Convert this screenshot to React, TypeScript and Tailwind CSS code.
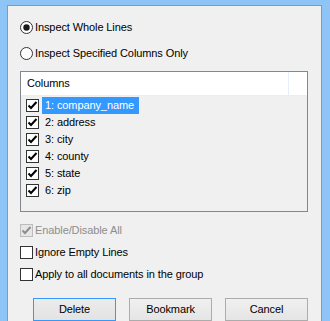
import React from "react";

const font = { fontFamily: '"Liberation Sans", Arial, sans-serif' };

function Radio({ checked }: { checked?: boolean }) {
  return (
    <svg width="13" height="13" viewBox="0 0 13 13" className="shrink-0">
      <circle cx="6.5" cy="6.5" r="6" fill="#fff" stroke="#333" strokeWidth="1" />
      {checked && <circle cx="6.5" cy="6.5" r="3.2" fill="#1a1a1a" />}
    </svg>
  );
}

function Check({ checked, disabled }: { checked?: boolean; disabled?: boolean }) {
  const border = disabled ? "#bcbcbc" : "#333";
  const bg = disabled ? "#e6e6e6" : "#fff";
  const mark = disabled ? "#8d8d8d" : "#000";
  return (
    <svg width="13" height="13" viewBox="0 0 13 13" className="shrink-0">
      <rect x="0.5" y="0.5" width="12" height="12" fill={bg} stroke={border} />
      {checked && (
        <path d="M2.5 6.5 L5 9 L10.5 3" fill="none" stroke={mark} strokeWidth="2" />
      )}
    </svg>
  );
}

const cols = ["1: company_name", "2: address", "3: city", "4: county", "5: state", "6: zip"];

export default function App() {
  return (
    <div
      className="w-[330px] h-[321px] overflow-hidden bg-[#8ec4f6] pl-[7px] pt-[5px] pr-[8px] text-[11px] tracking-[-0.1px] text-black"
      style={font}
    >
      <div className="h-full bg-[#f0f0f0] border-l border-t border-r border-[#6aa0d4] flex flex-col pl-[12px] pr-[13px]">
        <div className="mt-[15px] flex items-center h-[13px] gap-[2px]">
          <Radio checked />
          <span className="leading-[13px]">Inspect Whole Lines</span>
        </div>
        <div className="mt-[13px] flex items-center h-[13px] gap-[2px]">
          <Radio />
          <span className="leading-[13px]">Inspect Specified Columns Only</span>
        </div>
        <div className="mt-[11px] h-[143px] border border-[#828790] flex flex-col">
          <div className="h-[24px] bg-white border-b border-[#e5eefb] flex shrink-0">
            <div className="flex-1 flex items-center pl-[6px] border-r border-[#e5eefb]">Columns</div>
            <div className="w-[18px]" />
          </div>
          <div className="flex flex-col pt-[1px]">
            {cols.map((c, i) => (
              <div key={c} className="h-[17px] flex items-center pl-[5px]">
                <Check checked />
                <span
                  className={
                    "ml-[3px] h-[17px] flex items-center pl-[3px] pr-[5px] " +
                    (i === 0 ? "bg-[#3399ff] text-white" : "")
                  }
                >
                  {c}
                </span>
              </div>
            ))}
          </div>
        </div>
        <div className="mt-[12px] flex items-center h-[13px] gap-[2px]">
          <Check checked disabled />
          <span className="leading-[13px] text-[#8d8d8d]">Enable/Disable All</span>
        </div>
        <div className="mt-[9px] flex items-center h-[13px] gap-[2px]">
          <Check />
          <span className="leading-[13px]">Ignore Empty Lines</span>
        </div>
        <div className="mt-[9px] flex items-center h-[13px] gap-[2px]">
          <Check />
          <span className="leading-[13px]">Apply to all documents in the group</span>
        </div>
        <div className="mt-[17px] flex justify-end gap-[13px]">
          <button className="w-[83px] h-[23px] border border-[#3399ff] bg-gradient-to-b from-[#ececec] to-[#e3e3e3] flex items-center justify-center">
            Delete
          </button>
          <button className="w-[83px] h-[23px] border border-[#acacac] bg-gradient-to-b from-[#f0f0f0] to-[#e5e5e5] flex items-center justify-center">
            Bookmark
          </button>
          <button className="w-[83px] h-[23px] border border-[#acacac] bg-gradient-to-b from-[#f0f0f0] to-[#e5e5e5] flex items-center justify-center">
            Cancel
          </button>
        </div>
      </div>
    </div>
  );
}
